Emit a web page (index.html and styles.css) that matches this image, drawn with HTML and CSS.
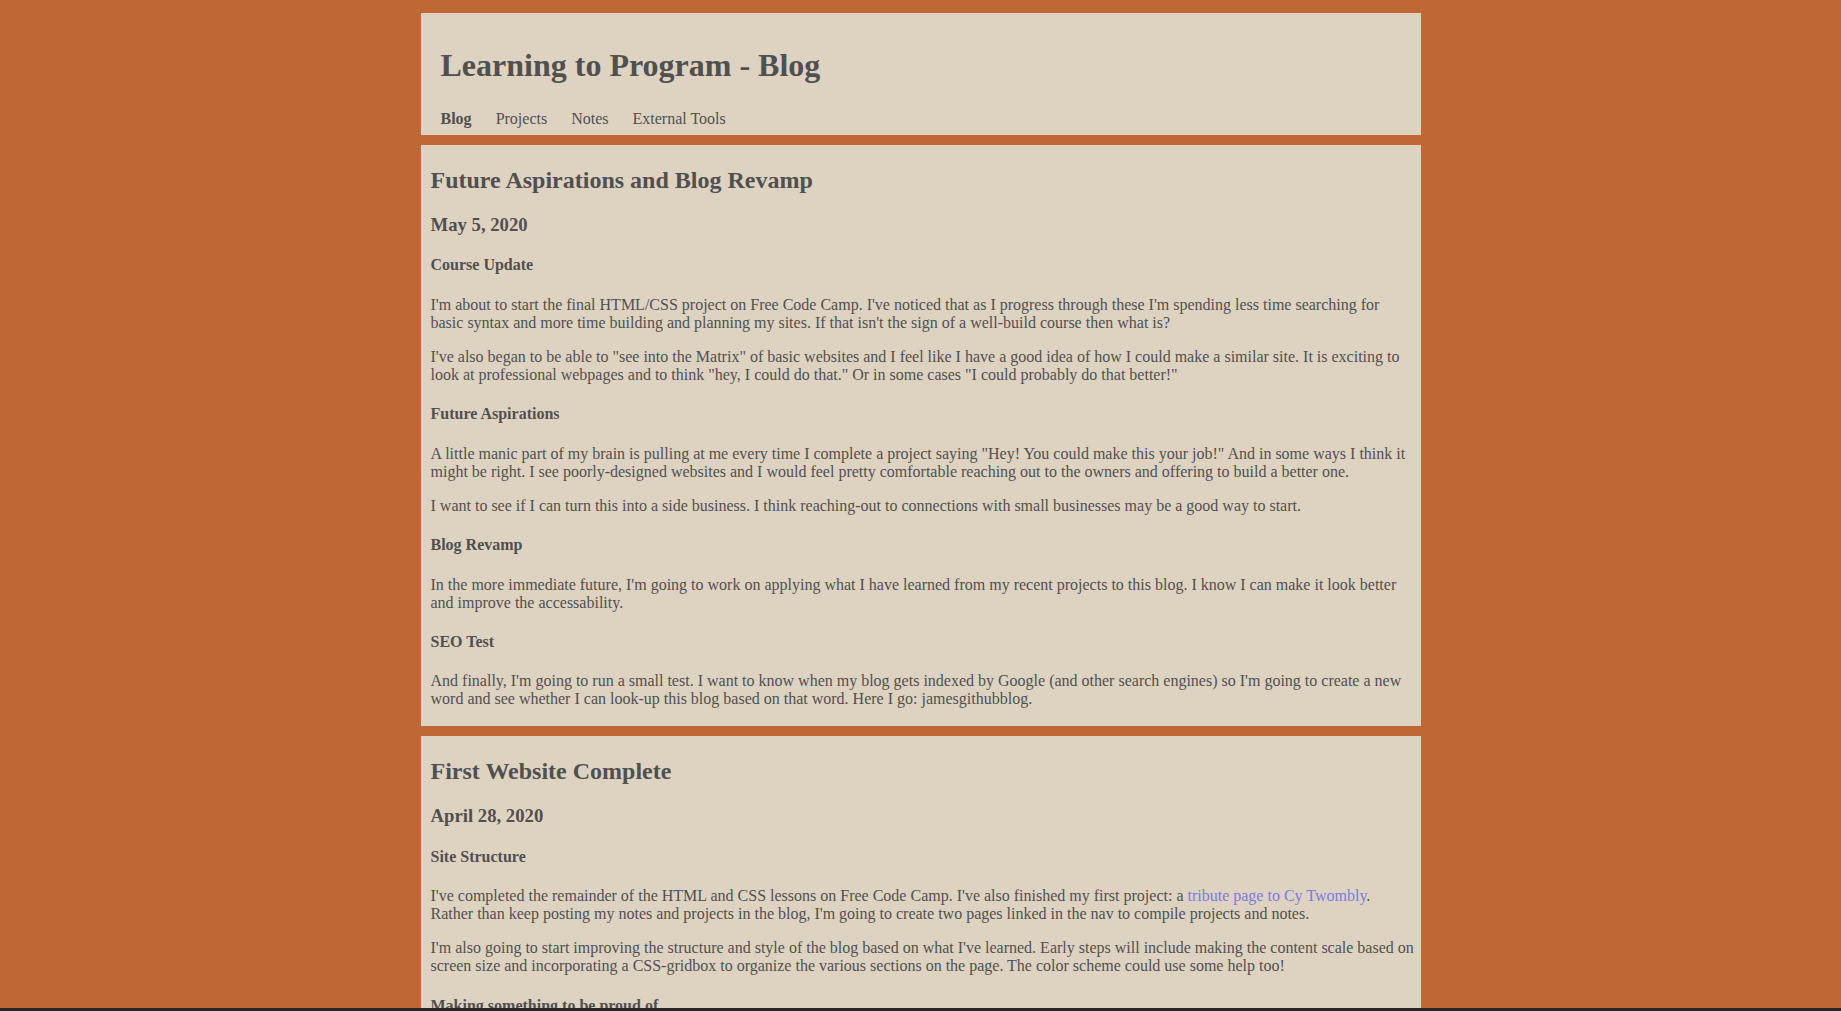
FILE: index.html
```html
<!DOCTYPE html>
<html lang="en">
<head>
<meta charset="utf-8">
<title>Learning to Program - Blog</title>
<link rel="stylesheet" href="styles.css">
</head>
<body>
<div class="page">
  <header class="site-header">
    <h1 class="site-title">Learning to Program - Blog</h1>
    <nav class="site-nav">
      <a class="nav-link nav-active" href="#">Blog</a>
      <a class="nav-link" href="#">Projects</a>
      <a class="nav-link" href="#">Notes</a>
      <a class="nav-link" href="#">External Tools</a>
    </nav>
  </header>

  <article class="post">
    <h2>Future Aspirations and Blog Revamp</h2>
    <h3>May 5, 2020</h3>
    <h4>Course Update</h4>
    <p>I'm about to start the final HTML/CSS project on Free Code Camp. I've noticed that as I progress through these I'm spending less time searching for basic syntax and more time building and planning my sites. If that isn't the sign of a well-build course then what is?</p>
    <p>I've also began to be able to "see into the Matrix" of basic websites and I feel like I have a good idea of how I could make a similar site. It is exciting to look at professional webpages and to think "hey, I could do that." Or in some cases "I could probably do that better!"</p>
    <h4>Future Aspirations</h4>
    <p>A little manic part of my brain is pulling at me every time I complete a project saying "Hey! You could make this your job!" And in some ways I think it might be right. I see poorly-designed websites and I would feel pretty comfortable reaching out to the owners and offering to build a better one.</p>
    <p>I want to see if I can turn this into a side business. I think reaching-out to connections with small businesses may be a good way to start.</p>
    <h4>Blog Revamp</h4>
    <p>In the more immediate future, I'm going to work on applying what I have learned from my recent projects to this blog. I know I can make it look better and improve the accessability.</p>
    <h4>SEO Test</h4>
    <p>And finally, I'm going to run a small test. I want to know when my blog gets indexed by Google (and other search engines) so I'm going to create a new word and see whether I can look-up this blog based on that word. Here I go: jamesgithubblog.</p>
  </article>

  <article class="post">
    <h2>First Website Complete</h2>
    <h3>April 28, 2020</h3>
    <h4>Site Structure</h4>
    <p>I've completed the remainder of the HTML and CSS lessons on Free Code Camp. I've also finished my first project: a <a class="text-link" href="#">tribute page to Cy Twombly</a>. Rather than keep posting my notes and projects in the blog, I'm going to create two pages linked in the nav to compile projects and notes.</p>
    <p>I'm also going to start improving the structure and style of the blog based on what I've learned. Early steps will include making the content scale based on screen size and incorporating a CSS-gridbox to organize the various sections on the page. The color scheme could use some help too!</p>
    <h4>Making something to be proud of</h4>
    <p>I want this blog to become something I am proud to show people.</p>
  </article>
</div>
<div class="bottom-edge"></div>
</body>
</html>
```

FILE: styles.css
```css
html {
  background: #bf6836;
}

body {
  margin: 0;
  background: #bf6836;
  color: #505050;
  font-family: "Liberation Serif", "Times New Roman", serif;
  font-size: 16px;
  line-height: 1.13;
}

.page {
  width: 1000px;
  margin: 0 auto;
  padding: 13px 0 10px;
  display: flex;
  flex-direction: column;
  gap: 10px;
}

.site-header {
  background: #ded3c1;
  padding: 13px 20px 0;
}

.site-title {
  font-size: 32px;
  font-weight: bold;
  margin: 21.44px 0;
}

.site-nav {
  display: flex;
  gap: 24px;
  padding: 5px 0 7px;
}

.nav-link {
  color: #505050;
  text-decoration: none;
}

.nav-active {
  font-weight: bold;
}

.post {
  background: #ded3c1;
  padding: 2px 5px 2px 10px;
}

.post h2 {
  font-size: 24px;
  margin: 19.92px 0;
}

.post h3 {
  font-size: 18.72px;
  margin: 18.72px 0;
}

.post h4 {
  font-size: 16px;
  margin: 21.28px 0;
}

.post p {
  margin: 16px 0;
}

.text-link {
  color: #7a7ae6;
  text-decoration: none;
}

.bottom-edge {
  position: fixed;
  left: 0;
  right: 0;
  bottom: 0;
  height: 3px;
  background: #262626;
}
```
